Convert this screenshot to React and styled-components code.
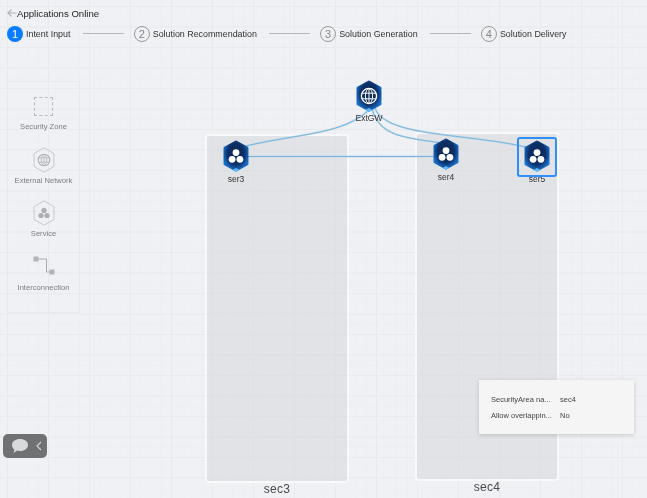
import styled, { createGlobalStyle } from 'styled-components'

const GlobalStyle = createGlobalStyle`
    html, body {
        margin: 0;
        padding: 0;
        background: #f0f1f5;
        font-family: "Liberation Sans", Arial, sans-serif;
    }
`;

const Page = styled.div`
    position: relative;
    width: 647px;
    height: 498px;
    overflow: hidden;
    filter: blur(0.35px);
    background-color: #f0f1f5;
    background-image:
        linear-gradient(to right, #e9eaec 1px, transparent 1px),
        linear-gradient(to bottom, #e9eaec 1px, transparent 1px),
        linear-gradient(to right, #edeef1 1px, transparent 1px),
        linear-gradient(to bottom, #edeef1 1px, transparent 1px);
    background-size: 41px 41px, 41px 20.5px, 10.25px 10.25px, 10.25px 10.25px;
    background-position: 7px 0, 0 6px, 7px 0, 0 6px;
`;

const Header = styled.header`
    position: relative;
    z-index: 3;
    padding: 6px 0 0 7px;
    display: flex;
    flex-direction: column;
`;

const TitleRow = styled.div`
    display: flex;
    align-items: center;
    height: 14px;
    font-size: 9.6px;
    color: #1f1f1f;
`;

const BackArrow = styled.svg`
    width: 10px;
    height: 10px;
    flex: none;
`;

const Stepper = styled.div`
    display: flex;
    align-items: center;
    margin-top: 6px;
    height: 16px;
`;

const Step = styled.div`
    display: flex;
    align-items: center;
    gap: 3px;
    font-size: 8.9px;
    color: #333;
    white-space: nowrap;
`;

const StepNumber = styled.span`
    box-sizing: border-box;
    width: 16px;
    height: 16px;
    border-radius: 50%;
    display: grid;
    place-content: center;
    font-size: 11px;
    color: ${props => props.$active ? '#fff' : '#888'};
    background: ${props => props.$active ? '#0a7cff' : 'transparent'};
    border: ${props => props.$active ? 'none' : '1px solid #9a9a9a'};
`;

const Connector = styled.span`
    width: 41px;
    height: 1px;
    margin: 0 10px 2px 9.3px;
    background: #b4b6ba;
`;

const Palette = styled.aside`
    position: absolute;
    left: 7px;
    top: 81px;
    box-sizing: border-box;
    width: 73px;
    height: 232px;
    border: 1px solid #e7e8eb;
    color: #7b7d81;
    font-size: 7.6px;
`;

const PaletteItem = styled.div`
    position: absolute;
    top: ${props => props.$top}px;
    left: 0;
    right: 0;
    height: ${props => props.$height}px;
    display: flex;
    flex-direction: column;
    align-items: center;
    justify-content: space-between;
    white-space: nowrap;
`;

const DashedZone = styled.div`
    box-sizing: border-box;
    width: 19px;
    height: 19px;
    border: 1px dashed #b9babd;
`;

const Canvas = styled.svg`
    position: absolute;
    inset: 0;
    width: 647px;
    height: 498px;
    z-index: 1;
`;

const Zone = styled.div`
    position: absolute;
    left: ${props => props.$x}px;
    top: ${props => props.$y}px;
    box-sizing: border-box;
    width: 144px;
    height: 349px;
    border: 2px solid #f9f9fb;
    border-radius: 4px;
    background: rgba(212, 213, 215, 0.5);
`;

const ZoneLabel = styled.span`
    position: absolute;
    left: 0;
    right: 0;
    bottom: -15px;
    text-align: center;
    font-size: 12px;
    line-height: 14px;
    letter-spacing: 0.3px;
    color: #4a4a4a;
`;

const Node = styled.div`
    position: absolute;
    left: ${props => props.$x - 20}px;
    top: ${props => props.$y - 17}px;
    width: 40px;
    z-index: 2;
    display: flex;
    flex-direction: column;
    align-items: center;
    font-size: 8.5px;
    color: #333;
`;

const NodeIcon = styled.svg`
    width: 28px;
    height: 34px;
    display: block;
`;

const NodeName = styled.span`
    margin-top: ${props => props.$gap}px;
    line-height: 10px;
    white-space: nowrap;
`;

const Selection = styled.div`
    position: absolute;
    left: 517px;
    top: 137px;
    box-sizing: border-box;
    width: 40px;
    height: 40px;
    border: 2px solid #2f8fff;
    border-radius: 3px;
    z-index: 2;
`;

const Popup = styled.div`
    position: absolute;
    left: 479px;
    top: 380px;
    box-sizing: border-box;
    width: 155px;
    height: 54px;
    padding: 11px 12px;
    z-index: 4;
    background: #f5f5f5;
    box-shadow: 0 1px 4px rgba(0, 0, 0, 0.18);
    display: grid;
    grid-template-columns: 69px 1fr;
    grid-auto-rows: 16px;
    align-items: center;
    font-size: 7.5px;
    color: #444;
`;

const ChatToggle = styled.div`
    position: absolute;
    left: 3px;
    top: 434px;
    width: 44px;
    height: 24px;
    z-index: 4;
    border-radius: 5px;
    background: #707172;
    display: flex;
    align-items: center;
    justify-content: space-between;
    box-sizing: border-box;
    padding: 0 5px 0 8px;
`;

const ChatGlyph = styled.svg`
    display: block;
    flex: none;
`;

const HexBody = ({ id, children }) => (
    <NodeIcon viewBox="0 0 28 34">
        <defs>
            <radialGradient id={id} cx="50%" cy="42%" r="62%">
                <stop offset="0%" stopColor="#0b2753" />
                <stop offset="62%" stopColor="#0d2f66" />
                <stop offset="100%" stopColor="#1a74d2" />
            </radialGradient>
        </defs>
        <polygon points="14,3 25,9 25,25 14,31 3,25 3,9" fill={`url(#${id})`} stroke={`url(#${id})`} strokeWidth="3" strokeLinejoin="round" />
        <polygon points="10.500,31 14,33 17.500,31 14,29" fill="#64b8f7" />
        {children}
    </NodeIcon>
);

const ServiceDots = ({ fill = '#fff' }) => (
    <g fill={fill}>
        <circle cx="14" cy="13.600" r="3.400" />
        <circle cx="10.100" cy="20.300" r="3.400" />
        <circle cx="17.900" cy="20.300" r="3.400" />
    </g>
);

const GlobeLines = ({ stroke = '#fff' }) => (
    <g fill="none" stroke={stroke} strokeWidth="1">
        <circle cx="14" cy="17" r="7.600" strokeWidth="1.400" />
        <ellipse cx="14" cy="17" rx="3.600" ry="7.400" />
        <path d="M7 14.200h14M7 19.800h14M14 9.500v15" />
    </g>
);

const nodes = [
    { name: 'ser3', x: 236, y: 156, gap: 1 },
    { name: 'ser4', x: 446, y: 154, gap: 1 },
    { name: 'ser5', x: 537, y: 156, gap: 1 },
];

const edges = [
    'M371 108C345 135 300 133 246 146',
    'M372 108C378 136 405 138 443 143',
    'M375 108C385 137 465 133 526 147',
    'M246 156.500H434',
];

const steps = ['Intent Input', 'Solution Recommendation', 'Solution Generation', 'Solution Delivery'];

const App = () => {
    return (
        <Page>
            <GlobalStyle />
            <Header>
                <TitleRow>
                    <BackArrow viewBox="0 0 10 10">
                        <path d="M9.500 5H1M4.500 1.500L1 5l3.500 3.500" fill="none" stroke="#b0b2b6" strokeWidth="1.200" />
                    </BackArrow>
                    Applications Online
                </TitleRow>
                <Stepper>
                    {steps.map((label, i) => (
                        <Step key={label}>
                            <StepNumber $active={i === 0}>{i + 1}</StepNumber>
                            {label}
                            {i < steps.length - 1 && <Connector />}
                        </Step>
                    ))}
                </Stepper>
            </Header>

            <Palette>
                <PaletteItem $top={15} $height={34}>
                    <DashedZone />
                    <span>Security Zone</span>
                </PaletteItem>
                <PaletteItem $top={65} $height={38}>
                    <svg width="24" height="26" viewBox="0 0 28 34">
                        <polygon points="14,1 27,8.500 27,25.500 14,33 1,25.500 1,8.500" fill="none" stroke="#c4c5c8" strokeWidth="1.200" />
                        <GlobeLines stroke="#b0b1b4" />
                    </svg>
                    <span>External Network</span>
                </PaletteItem>
                <PaletteItem $top={118} $height={38}>
                    <svg width="24" height="26" viewBox="0 0 28 34">
                        <polygon points="14,1 27,8.500 27,25.500 14,33 1,25.500 1,8.500" fill="none" stroke="#c4c5c8" strokeWidth="1.200" />
                        <ServiceDots fill="#adaeb1" />
                    </svg>
                    <span>Service</span>
                </PaletteItem>
                <PaletteItem $top={174} $height={36}>
                    <svg width="22" height="20" viewBox="0 0 22 20">
                        <path d="M3 3h10.500v13H18" fill="none" stroke="#a9aaad" strokeWidth="1" />
                        <rect x="0.500" y="0.500" width="5" height="5" fill="#b3b4b7" />
                        <rect x="16.500" y="13.500" width="5" height="5" fill="#b3b4b7" />
                    </svg>
                    <span>Interconnection</span>
                </PaletteItem>
            </Palette>

            <Zone $x={205} $y={134}><ZoneLabel>sec3</ZoneLabel></Zone>
            <Zone $x={415} $y={132}><ZoneLabel>sec4</ZoneLabel></Zone>

            <Canvas viewBox="0 0 647 498">
                <g fill="none" stroke="#bcd9ea" strokeWidth="2">
                    {edges.map(d => <path key={d} d={d} />)}
                </g>
                <g fill="none" stroke="#74b1d8" strokeWidth="0.9">
                    {edges.map(d => <path key={d} d={d} />)}
                </g>
            </Canvas>

            <Node $x={369} $y={96}>
                <HexBody id="hexGw"><GlobeLines /></HexBody>
                <NodeName $gap={0}>ExtGW</NodeName>
            </Node>
            {nodes.map(node => (
                <Node key={node.name} $x={node.x} $y={node.y}>
                    <HexBody id={`hex-${node.name}`}><ServiceDots /></HexBody>
                    <NodeName $gap={node.gap}>{node.name}</NodeName>
                </Node>
            ))}
            <Selection />

            <Popup>
                <span>SecurityArea na...</span>
                <span>sec4</span>
                <span>Allow overlappin...</span>
                <span>No</span>
            </Popup>

            <ChatToggle>
                <ChatGlyph width="18" height="16" viewBox="0 0 18 16">
                    <path d="M9 1c4.600 0 8 2.500 8 6s-3.400 6-8 6c-1 0-2-.1-2.800-.4L2.500 15l.9-3.400C1.900 10.500 1 8.900 1 7c0-3.500 3.400-6 8-6z" fill="#d9dadb" />
                </ChatGlyph>
                <ChatGlyph width="6" height="10" viewBox="0 0 6 10">
                    <path d="M5 1L1 5l4 4" fill="none" stroke="#cfd0d1" strokeWidth="1.200" />
                </ChatGlyph>
            </ChatToggle>
        </Page>
    )
}

export default App
